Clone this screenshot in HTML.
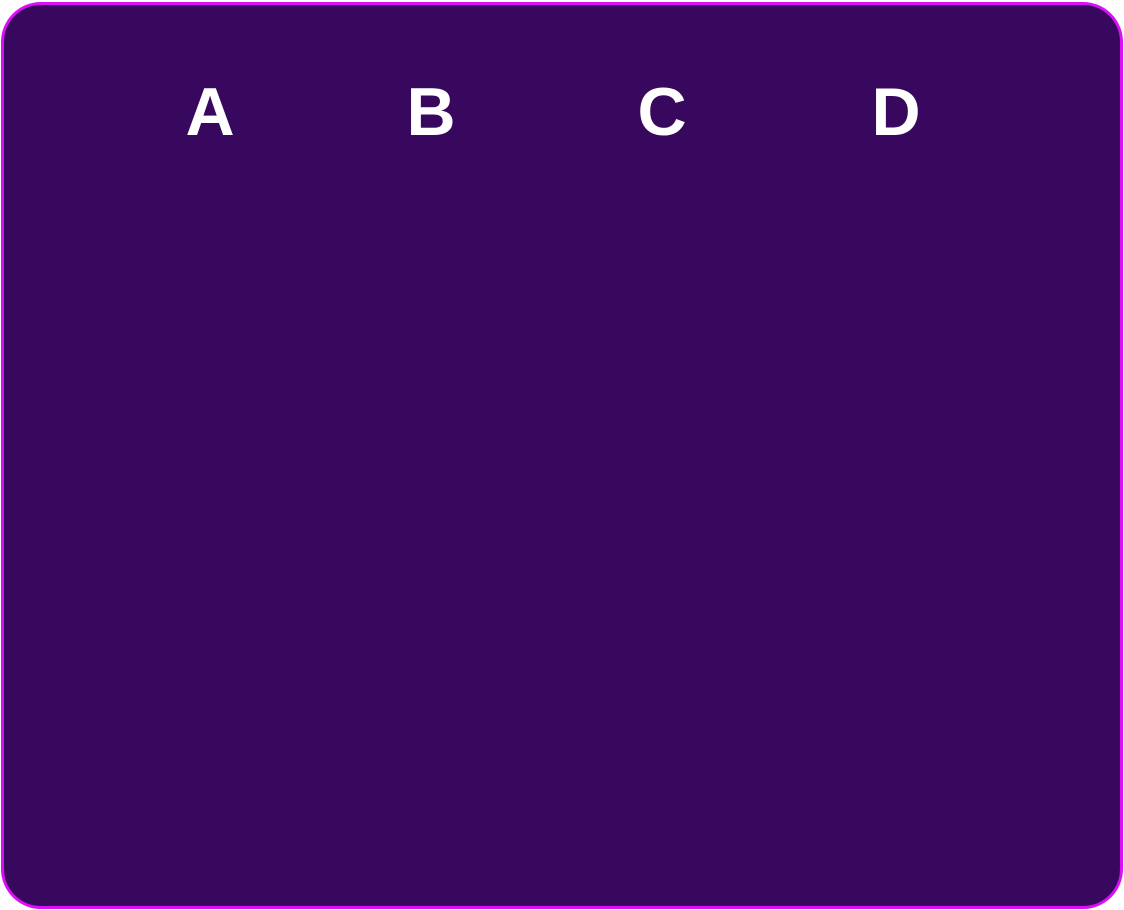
<!DOCTYPE html>
<html><head><style>
html,body{margin:0;padding:0;background:#fff;width:1124px;height:910px;overflow:hidden}
.box{position:absolute;left:1px;top:2px;width:1116px;height:901px;border:3px solid #d90ff5;border-radius:40px;background:#37085d}
.l{position:absolute;top:72px;font:bold 68px "Liberation Sans",sans-serif;color:#fff;width:100px;text-align:center;line-height:80px}
</style></head><body>
<div class="box"></div>
<div class="l" style="left:160px">A</div>
<div class="l" style="left:381px">B</div>
<div class="l" style="left:612px">C</div>
<div class="l" style="left:846px">D</div>
</body></html>
